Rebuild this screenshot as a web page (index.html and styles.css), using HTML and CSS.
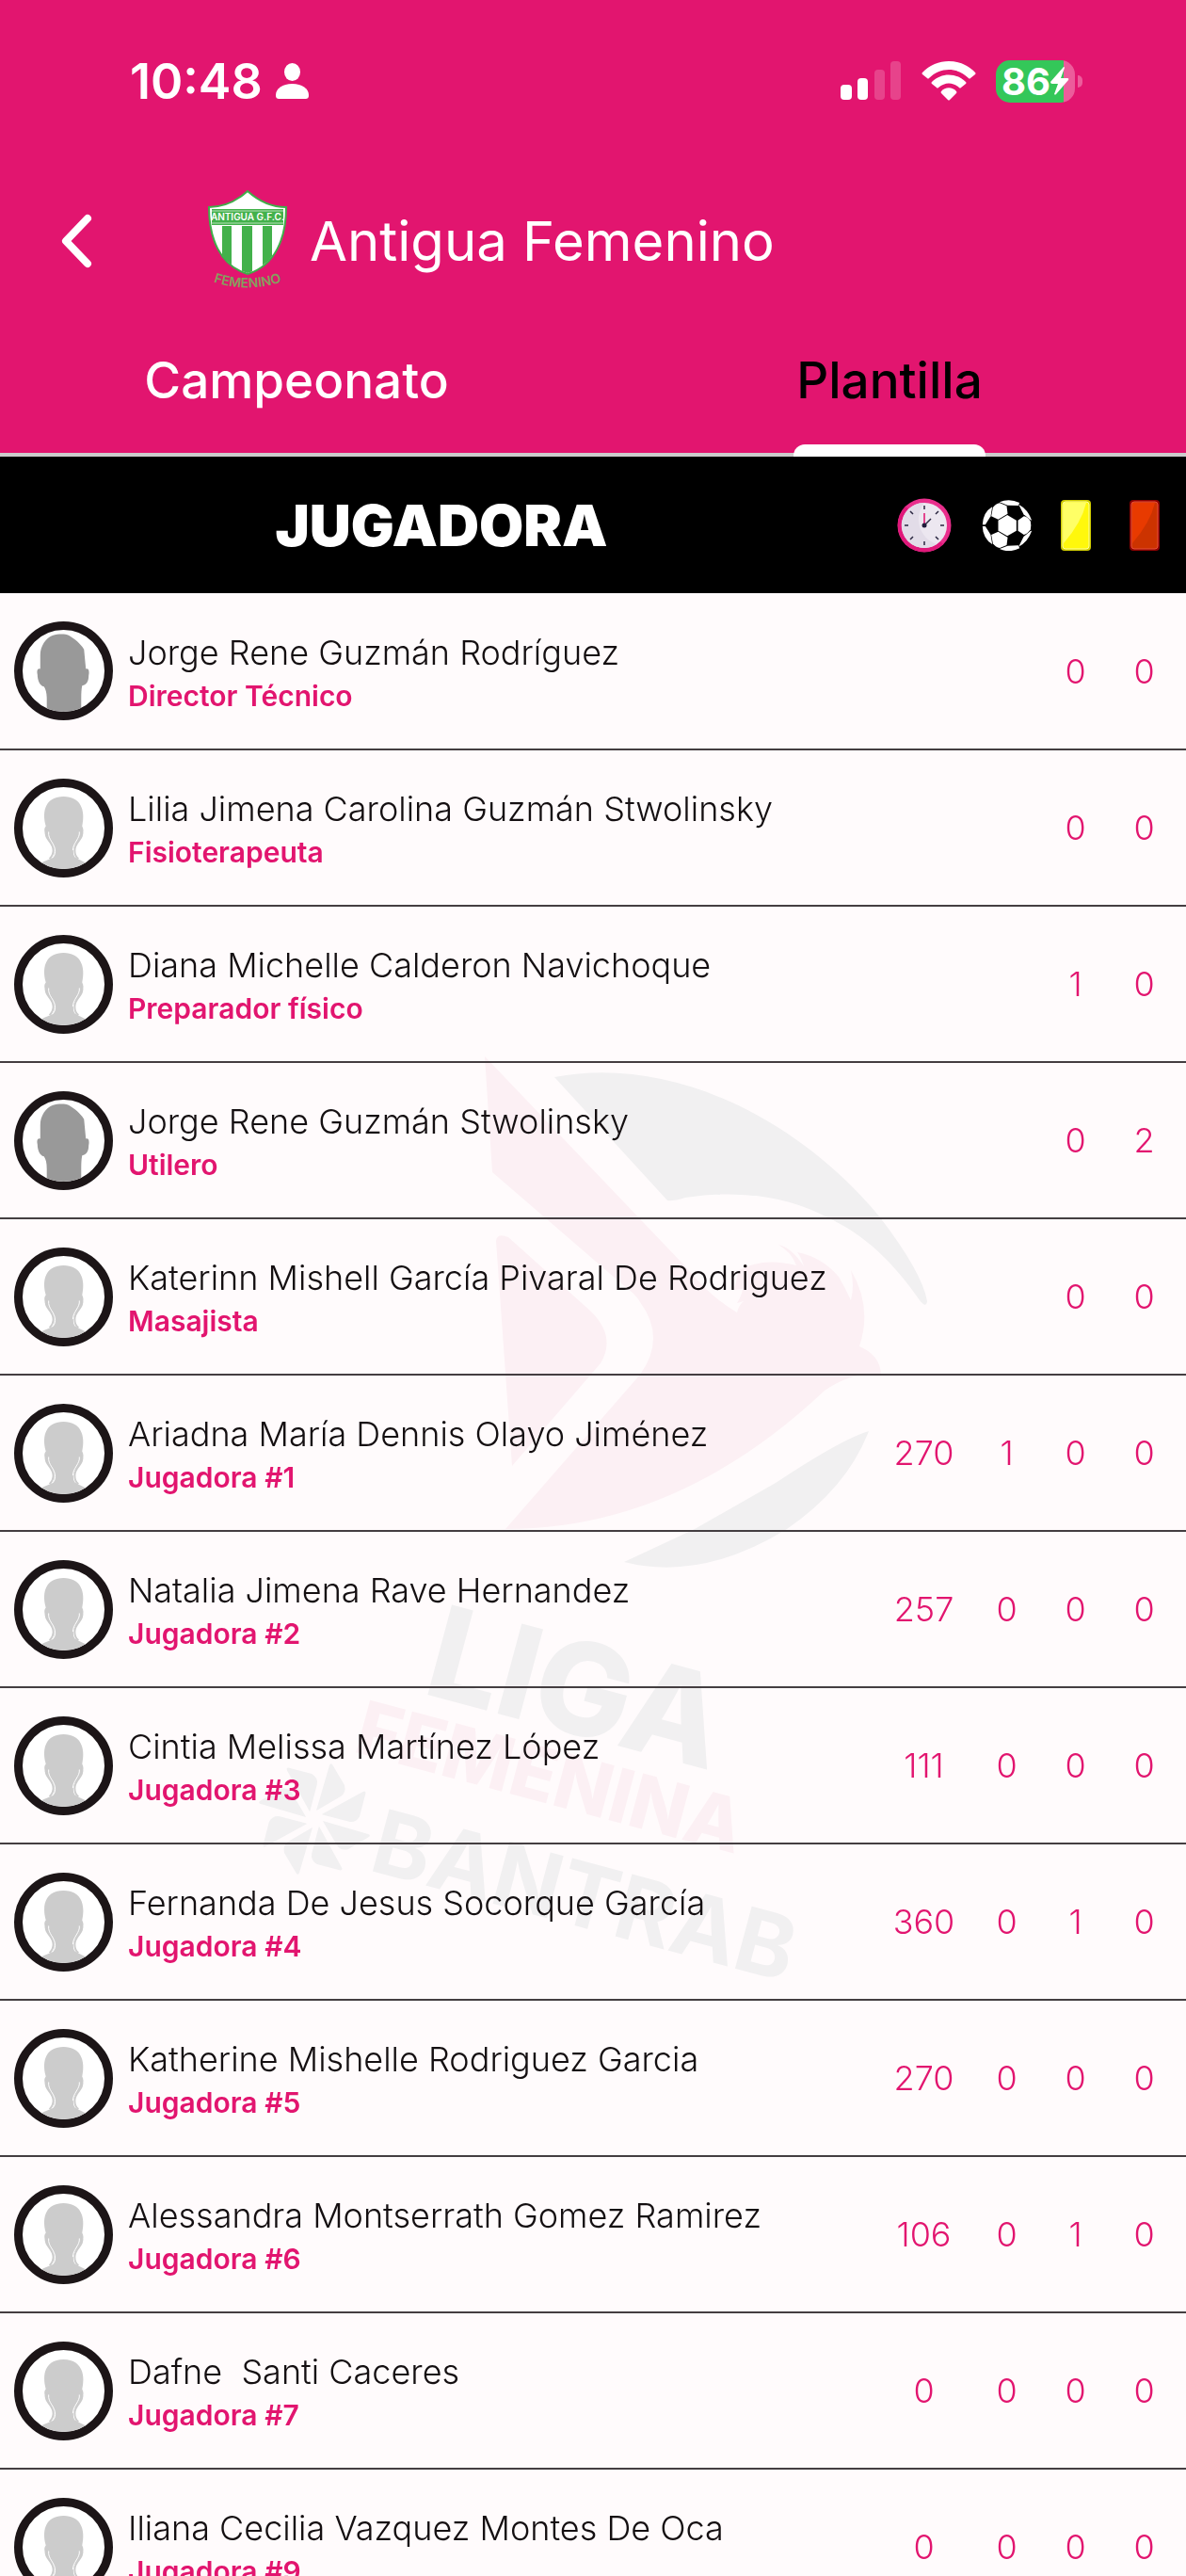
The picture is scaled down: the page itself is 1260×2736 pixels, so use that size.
FILE: index.html
```
<!DOCTYPE html>
<html lang="es">
<head>
  <meta charset="UTF-8">
  <meta name="viewport" content="width=device-width, initial-scale=1.0">
  <title>Antigua Femenino - Plantilla</title>
  <link rel="stylesheet" href="styles.css">
</head>
<body>

<!-- shared shapes -->
<svg class="defs" aria-hidden="true">
  <symbol id="man" viewBox="0 0 88 88">
    <path fill="#999" d="M26 96V74C26 68 25 64 23 61C18 60 16 53 16 48C15 44 16 41 19 42V27C19 17 25 9 32 6C39 4 45 4 50 6C56 10 62 14 66 21L68 42C71 41 72 44 71 49C71 55 69 59 64 60C63 65 63 70 63 76V96Z"/>
  </symbol>
  <symbol id="woman" viewBox="0 0 88 88">
    <path fill="#ccc" d="M14 88C18 80 26 79 32 76C35 73 34 67 33 63C29 59 27 55 25 50C23 47 23 44 25 42C20 24 26 10 44 10C62 10 68 24 64 42C66 45 65 48 64 51C61 56 59 60 56 63C54 68 54 72 56 75C61 79 70 80 76 88Z"/>
    <path fill="none" stroke="#ccc" stroke-width="2" d="M25 46C23 57 33 58 33 68C33 72 31 75 29 77M64 46C66 57 56 58 56 68C56 72 57 75 60 77"/>
    <path fill="none" stroke="#fff" stroke-width="1" d="M28 48C27 57 35 60 35 69C35 72 34 74 32 76M61 48C62 55 54 60 54 68"/>
  </symbol>
</svg>

<div class="app">
  <header class="top">
    <div class="status">
      <div class="status-left">
        <span>10:48</span>
        <svg width="35" height="38" viewBox="0 0 35 38" fill="#fff"><ellipse cx="17.5" cy="9.5" rx="8.5" ry="9.5"/><path d="M0 34C0 27 7 22 17.500 22S35 27 35 34C35 37 34 38 31 38H4C1 38 0 37 0 34Z"/></svg>
      </div>
      <div class="status-right">
        <svg width="65" height="42" viewBox="0 0 65 42" fill="#fff"><rect y="25" width="12" height="16" rx="4"/><rect x="18" y="18" width="11" height="23" rx="4"/><rect x="36" y="9" width="11" height="32" rx="4" opacity=".2"/><rect x="53" width="11" height="41" rx="4" opacity=".2"/></svg>
        <svg width="58" height="42" viewBox="0 0 58 42" fill="#fff"><path d="M1 12C16-4 42-4 57 12Q58 13 57 14L52 18Q51 19 50 18C38 6 20 6 8 18Q7 19 6 18L1 14Q0 13 1 12Z"/><path d="M11 22C21 12 37 12 47 22Q48 23 47 24L42 28Q41 29 40 28C33 22 25 22 18 28Q17 29 16 28L11 24Q10 23 11 22Z"/><path d="M21 32C25 27 33 27 37 32Q38 33 37 34L30 41Q29 42 28 41L21 34Q20 33 21 32Z"/></svg>
        <div class="battery">
          <span>86</span>
          <svg width="20" height="30" viewBox="0 0 20 30" fill="#fff"><path d="M14 0L0 16Q0 18 2 18H8L4 29Q5 30 6 29L19 14Q20 12 18 12H11L15 1Q15 0 14 0Z"/></svg>
        </div>
      </div>
    </div>

    <div class="bar">
      <button class="back" type="button" aria-label="Atrás">
        <svg width="34" height="58" viewBox="0 0 34 58"><path d="M29 5L6 29L29 53" fill="none" stroke="#fff" stroke-width="8" stroke-linecap="round" stroke-linejoin="round"/></svg>
      </button>
      <svg class="crest" width="84" height="108" viewBox="0 0 84 108" role="img" aria-label="Antigua G.F.C. Femenino">
        <clipPath id="shield"><path d="M42 2C32 11 18 19 3 20C2 50 10 77 42 88C74 77 82 50 81 20C66 19 52 11 42 2Z"/></clipPath>
        <path fill="#fff" stroke="#3fae49" stroke-width="2" d="M42 1C32 10 18 18 1 18C1 50 12 80 42 89C72 80 83 50 83 18C66 18 52 10 42 1Z"/>
        <g clip-path="url(#shield)" fill="#43b14b">
          <path d="M4 20H80V37H4Z"/>
          <path d="M15 38H25V84H15ZM36 38H47V90H36ZM58 38H68V84H58Z"/>
          <path d="M4 22H80M4 35H80" stroke="#b7e0b9" stroke-width="1"/>
        </g>
        <text class="crest-name" x="42" y="32">ANTIGUA G.F.C.</text>
        <path id="arc" d="M2 96Q42 111 82 96" fill="none"/>
        <text class="crest-sub"><textPath href="#arc" startOffset="50%">FEMENINO</textPath></text>
      </svg>
      <h1>Antigua Femenino</h1>
    </div>

    <nav class="tabs">
      <button class="tab" type="button"><span>Campeonato</span></button>
      <button class="tab active" type="button"><span>Plantilla</span></button>
    </nav>
  </header>

  <main class="roster">
    <!-- league watermark -->
    <svg class="watermark" viewBox="0 146 1260 2105" preserveAspectRatio="xMidYMin meet" aria-hidden="true">
      <g transform="translate(0 -485)">
        <g fill="#fcf0f4">
          <path d="M515 1122L728 1345Q755 1378 783 1394Q785 1386 790 1382L783 1384Q788 1376 789 1369L780 1370L785 1349Q811 1335 846 1344Q841 1330 827 1322Q841 1325 854 1345Q851 1335 847 1330Q873 1335 891 1356Q898 1368 904 1381Q908 1366 904 1349Q927 1388 913 1430Q935 1439 936 1460Q907 1456 876 1477Q720 1624 537 1624L680 1460Q708 1421 680 1383Q676 1375 661 1364L523 1245Z"/>
          <path d="M527 1318Q528 1309 540 1314L628 1393Q655 1420 638 1448L544 1557Z"/>
        </g>
        <g fill="#f1f0f1">
          <path d="M589 1144C715 1120 850 1190 935 1293Q980 1352 985 1382Q984 1390 977 1381C950 1342 920 1312 879 1293Q814 1259 728 1272Q715 1276 709 1275Z"/>
          <path d="M923 1520Q900 1580 836 1624Q745 1680 663 1659L738 1624L824 1575Q895 1528 923 1520Z"/>
          <g transform="translate(334 1932)">
            <path id="blade" d="M2 -9L16 -57Q17 -60 19 -58L32 -36Q34 -28 28 -24L4 -10Z"/>
            <use href="#blade" transform="rotate(45)"/>
            <use href="#blade" transform="rotate(90)"/>
            <use href="#blade" transform="rotate(135)"/>
            <use href="#blade" transform="rotate(180)"/>
            <use href="#blade" transform="rotate(225)"/>
            <use href="#blade" transform="rotate(270)"/>
            <use href="#blade" transform="rotate(315)"/>
          </g>
        </g>
        <text class="wm-liga" transform="translate(447 1798) rotate(15)">LIGA</text>
        <text class="wm-femenina" transform="translate(374 1860) rotate(15)">FEMENINA</text>
        <text class="wm-bantrab" transform="translate(390 1986) rotate(15)">BANTRAB</text>
      </g>
    </svg>

    <table>
      <thead>
        <tr>
          <th class="col-name">JUGADORA</th>
          <th class="col-min">
            <svg width="58" height="58" viewBox="0 0 58 58" role="img" aria-label="Minutos">
              <circle cx="29" cy="29" r="28.500" fill="#e92e8c"/><path d="M9 49A28.500 28.500 0 0 1 9 9L49 49A28.500 28.500 0 0 1 9 49Z" fill="#e0187a"/>
              <circle cx="29" cy="29" r="24" fill="#ece7f0"/><path d="M29 5A24 24 0 1 0 42 49A28 28 0 0 1 29 5Z" fill="#e2dce8"/>
              <path d="M29 8V12M29 46V50M8 29H12M46 29H50M14 14L17 17M41 41L44 44M14 44L17 41M41 17L44 14" stroke="#2a2740" stroke-width="1.500"/>
              <path d="M29 29L36 22" stroke="#2a2740" stroke-width="1.500"/><path d="M29 28V16" stroke="#e0106f" stroke-width="1.500"/><circle cx="29" cy="29" r="2.500" fill="#201c3a"/>
            </svg>
          </th>
          <th class="col-stat">
            <svg width="54" height="54" viewBox="429 212 159 162" role="img" aria-label="Goles">
              <circle cx="508" cy="293" r="78"/>
              <g fill="#fff">
                <path d="M509 260L538 277V310L509 327L480 310V277Z"/>
                <path d="M562 264Q573 265 583 280Q586 293 583 306Q573 321 562 323L543 310V277Z"/>
                <path id="panel" d="M463 236Q472 224 485 222L507 231L510 256L480 274L458 264Z"/>
                <path id="rim1" d="M484 219Q515 205 548 221L544 230L510 229Z"/>
                <path id="rim2" d="M545 226Q575 242 587 277L583 276L561 258Z"/>
                <path id="rim3" d="M430 291Q431 252 461 234L456 264L439 291Z"/>
                <g transform="matrix(1 0 0 -1 0 587)"><use href="#panel"/><use href="#rim1"/><use href="#rim2"/><use href="#rim3"/></g>
              </g>
            </svg>
          </th>
          <th class="col-stat">
            <svg width="32" height="54" viewBox="0 0 32 54" role="img" aria-label="Tarjetas amarillas"><rect width="32" height="54" rx="4" fill="#cfcb00"/><rect x="2" y="2" width="28" height="50" rx="3" fill="#fff80c" stroke="#ffffa0"/><path d="M3 3H27Q22 24 3 46Z" fill="#ffff66"/></svg>
          </th>
          <th class="col-stat col-last">
            <svg width="32" height="54" viewBox="0 0 32 54" role="img" aria-label="Tarjetas rojas"><rect width="32" height="54" rx="4" fill="#8c0000"/><rect x="2" y="2" width="28" height="50" rx="3" fill="#cc3300" stroke="#e8503c"/><path d="M3 3H27Q22 24 3 46Z" fill="#e83a00"/></svg>
          </th>
        </tr>
      </thead>
      <tbody>
        <tr>
          <td><div class="player"><svg class="avatar"><use href="#man"/></svg><div><div class="name">Jorge Rene Guzmán Rodríguez</div><div class="role">Director Técnico</div></div></div></td>
          <td></td><td></td><td>0</td><td>0</td>
        </tr>
        <tr>
          <td><div class="player"><svg class="avatar"><use href="#woman"/></svg><div><div class="name">Lilia Jimena Carolina Guzmán Stwolinsky</div><div class="role">Fisioterapeuta</div></div></div></td>
          <td></td><td></td><td>0</td><td>0</td>
        </tr>
        <tr>
          <td><div class="player"><svg class="avatar"><use href="#woman"/></svg><div><div class="name">Diana Michelle Calderon Navichoque</div><div class="role">Preparador físico</div></div></div></td>
          <td></td><td></td><td>1</td><td>0</td>
        </tr>
        <tr>
          <td><div class="player"><svg class="avatar"><use href="#man"/></svg><div><div class="name">Jorge Rene Guzmán Stwolinsky</div><div class="role">Utilero</div></div></div></td>
          <td></td><td></td><td>0</td><td>2</td>
        </tr>
        <tr>
          <td><div class="player"><svg class="avatar"><use href="#woman"/></svg><div><div class="name">Katerinn Mishell García Pivaral De Rodriguez</div><div class="role">Masajista</div></div></div></td>
          <td></td><td></td><td>0</td><td>0</td>
        </tr>
        <tr>
          <td><div class="player"><svg class="avatar"><use href="#woman"/></svg><div><div class="name">Ariadna María Dennis Olayo Jiménez</div><div class="role">Jugadora #1</div></div></div></td>
          <td>270</td><td>1</td><td>0</td><td>0</td>
        </tr>
        <tr>
          <td><div class="player"><svg class="avatar"><use href="#woman"/></svg><div><div class="name">Natalia Jimena Rave Hernandez</div><div class="role">Jugadora #2</div></div></div></td>
          <td>257</td><td>0</td><td>0</td><td>0</td>
        </tr>
        <tr>
          <td><div class="player"><svg class="avatar"><use href="#woman"/></svg><div><div class="name">Cintia Melissa Martínez López</div><div class="role">Jugadora #3</div></div></div></td>
          <td>111</td><td>0</td><td>0</td><td>0</td>
        </tr>
        <tr>
          <td><div class="player"><svg class="avatar"><use href="#woman"/></svg><div><div class="name">Fernanda De Jesus Socorque García</div><div class="role">Jugadora #4</div></div></div></td>
          <td>360</td><td>0</td><td>1</td><td>0</td>
        </tr>
        <tr>
          <td><div class="player"><svg class="avatar"><use href="#woman"/></svg><div><div class="name">Katherine Mishelle Rodriguez Garcia</div><div class="role">Jugadora #5</div></div></div></td>
          <td>270</td><td>0</td><td>0</td><td>0</td>
        </tr>
        <tr>
          <td><div class="player"><svg class="avatar"><use href="#woman"/></svg><div><div class="name">Alessandra Montserrath Gomez Ramirez</div><div class="role">Jugadora #6</div></div></div></td>
          <td>106</td><td>0</td><td>1</td><td>0</td>
        </tr>
        <tr>
          <td><div class="player"><svg class="avatar"><use href="#woman"/></svg><div><div class="name">Dafne  Santi Caceres</div><div class="role">Jugadora #7</div></div></div></td>
          <td>0</td><td>0</td><td>0</td><td>0</td>
        </tr>
        <tr>
          <td><div class="player"><svg class="avatar"><use href="#woman"/></svg><div><div class="name">Iliana Cecilia Vazquez Montes De Oca</div><div class="role">Jugadora #9</div></div></div></td>
          <td>0</td><td>0</td><td>0</td><td>0</td>
        </tr>
      </tbody>
    </table>
  </main>
</div>

</body>
</html>
```
FILE: styles.css
```
* { box-sizing: border-box; }
body { margin: 0; background: #fffbfc; color: #140f11; font-family: Inter, "Liberation Sans", sans-serif; }
svg { display: block; }
button { border: none; background: none; padding: 0; font: inherit; color: inherit; cursor: pointer; }
.defs { position: absolute; width: 0; height: 0; }
.app { display: flex; flex-direction: column; height: 100vh; overflow: hidden; }

.top { background: #e2156f; color: #fff; }
.status { display: flex; justify-content: space-between; align-items: center; height: 172px; padding: 0 118px 0 138px; }
.status-left { display: flex; align-items: center; gap: 14px; font-size: 52px; font-weight: 600; }
.status-right { display: flex; align-items: center; gap: 21px; }
.battery { position: relative; display: flex; align-items: center; justify-content: center; width: 84px; height: 45px; border-radius: 15px; background: linear-gradient(90deg, #34c759 72px, #ec5c9b 72px); font-size: 40px; font-weight: 700; line-height: 45px; }
.battery::after { content: ""; position: absolute; right: -8px; top: 16px; width: 5px; height: 13px; border-radius: 0 5px 5px 0; background: #ec5c9b; }

.bar { display: flex; align-items: center; height: 168px; padding-left: 64px; }
.back { width: 157px; }
.crest { margin-right: 24px; overflow: visible; }
.crest-name { font-size: 10px; font-weight: 600; fill: #fff; text-anchor: middle; }
.crest-sub { font-size: 14px; font-weight: 600; fill: #84a05e; text-anchor: middle; }
h1 { margin: 0; font-size: 58px; font-weight: 400; }

.tabs { display: flex; border-bottom: 4px solid #ccc; }
.tab { position: relative; flex: 1; height: 141px; padding-bottom: 13px; font-size: 53px; font-weight: 500; }
.tab.active { color: #000; }
.tab.active span::after { content: ""; position: absolute; left: 50%; bottom: -4px; width: 204px; margin-left: -102px; height: 13px; border-radius: 12px 12px 0 0; background: #fff; }

.roster { position: relative; flex: 1; overflow-y: auto; scrollbar-width: none; }
.watermark { position: absolute; top: 146px; left: 0; width: 100%; z-index: -1; }
.watermark text { font-weight: 800; fill: #f1f0f1; }
.watermark .wm-liga { font-size: 136px; }
.watermark .wm-femenina { font-size: 79px; fill: #fcf0f4; }
.watermark .wm-bantrab { font-size: 94px; font-weight: 700; }

table { width: 100%; border-collapse: collapse; table-layout: fixed; }
th { height: 145px; padding: 0; background: #000; color: #fff; font-size: 61px; font-weight: 900; }
th svg { margin: 0 auto; }
.col-name { padding-left: 8px; }
.col-min { width: 103px; }
.col-stat { width: 73px; }
.col-last { width: 81px; }
td { height: 166px; padding: 0; border-bottom: 2px solid #443e41; text-align: center; font-size: 36px; font-weight: 300; color: #e2156f; }
th:last-child, td:last-child { padding-right: 8px; }
.player { display: flex; align-items: center; gap: 16px; padding-left: 15px; text-align: left; line-height: 46px; }
.player > div { padding-top: 6px; }
.avatar { flex: none; width: 105px; height: 105px; border: 9px solid #1c1517; border-radius: 50%; background: #fff; }
.name { font-size: 36px; color: #140f11; white-space: pre; }
.role { font-size: 30px; font-weight: 600; }
```
